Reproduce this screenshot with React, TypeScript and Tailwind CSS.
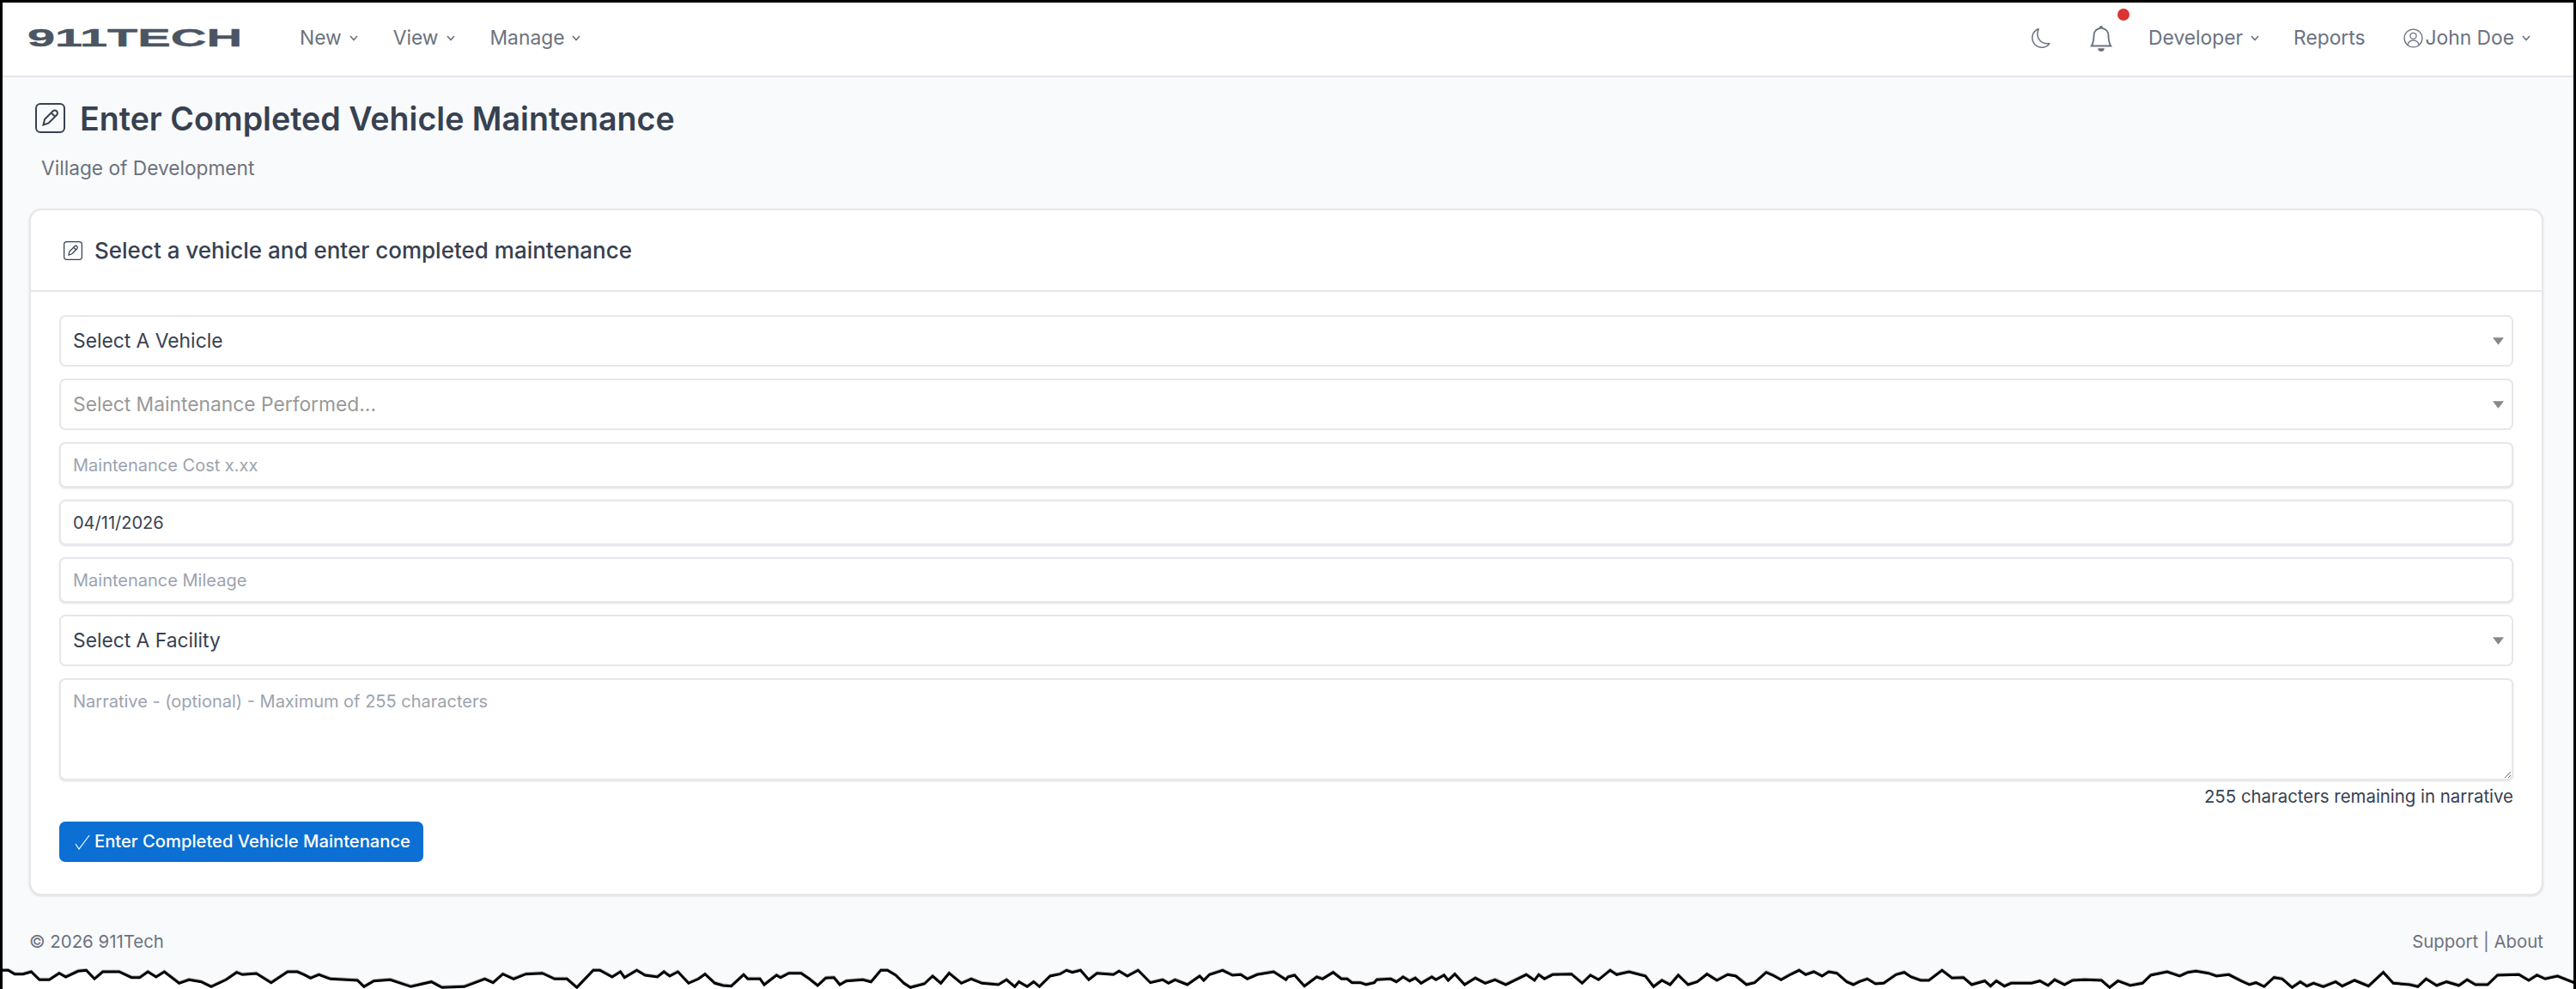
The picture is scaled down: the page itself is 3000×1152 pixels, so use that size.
import React from "react";
import { BsMoon, BsBell } from "react-icons/bs";

const tear1 = "0,55 10,55 18,68 28,68 38,60 48,88 60,88 72,65 80,78 95,58 105,55 115,85 125,60 145,60 160,80 170,80 180,60 190,78 200,60 218,100 230,88 245,95 257,112 275,88 288,62 295,70 312,66 330,98 350,60 362,60 370,70 378,82 388,70 402,85 435,90 443,112 455,92 475,88 500,112 525,95 538,115 565,112 590,85 600,98 612,68 625,85 640,68 660,65 675,85 690,85 702,115 722,55 730,55 745,78 755,60 760,80 775,55 785,72 800,78 808,60 815,75 825,60 838,100 850,85 858,68 870,100 880,108 890,110 905,70 910,85 925,85 930,105 945,72 950,80 960,65 975,65 985,85 995,108 1005,82 1015,80 1022,105 1030,92 1050,88 1060,95 1072,55 1080,55 1090,72 1100,100 1108,115 1125,102 1135,75 1145,100 1155,65 1170,100 1182,85 1195,100 1215,105 1225,88 1235,112 1240,95 1250,112 1258,95 1265,112 1278,75 1290,68 1298,55 1305,62 1315,55 1325,88 1335,65 1355,70 1362,58 1372,75 1385,55 1400,98 1415,88 1422,100 1430,88 1445,105 1460,75 1465,90 1472,70 1488,55 1500,72 1510,70 1518,85 1530,70 1550,60 1565,88";
const tear2 = "0,78 8,72 20,110 35,78 42,85 55,62 65,85 72,85 78,98 88,98 95,105 105,98 108,88 125,85 132,95 140,78 148,92 155,82 162,100 175,78 180,88 190,72 195,90 203,68 215,105 228,82 240,100 252,88 265,105 290,70 300,90 305,70 312,85 322,70 345,68 358,100 368,72 378,88 392,55 400,70 415,60 435,75 445,112 455,90 465,105 475,72 487,105 498,95 510,68 522,90 535,70 545,75 558,105 568,98 582,62 590,72 600,88 610,72 622,55 630,70 640,60 650,75 658,60 668,65 680,95 688,105 695,95 705,85 715,102 725,100 740,70 750,62 758,78 770,90 780,90 796,55 808,82 822,80 832,105 848,92 855,110 862,92 872,110 880,100 905,100 915,92 925,108 933,88 945,105 955,90 970,88 990,90 1000,115 1010,92 1025,108 1040,100 1050,72 1070,60 1085,75 1095,62 1105,58 1120,65 1130,75 1145,70 1160,92 1170,105 1178,98 1188,112 1200,80 1210,85 1222,115 1232,95 1240,110 1248,100 1260,112 1275,95 1283,110 1298,90 1315,110 1333,62 1345,100 1365,105 1375,112 1385,85 1398,108 1410,95 1425,108 1435,88 1445,105 1460,105 1472,72 1498,70 1510,90 1520,72 1530,85 1545,75 1565,98";

const toPts = (s: string, off: number) =>
  s.split(" ").map((p) => {
    const [h, v] = p.split(",").map(Number);
    return `${(h / 1.045 + off).toFixed(1)},${(v / 3).toFixed(1)}`;
  });

const pts = [...toPts(tear1, 0), ...toPts(tear2, 1500)].join(" ");

function Chevron({ className = "" }: { className?: string }) {
  return (
    <svg viewBox="0 0 10 7" className={`w-[10px] h-[7px] ${className}`} fill="none" stroke="currentColor" strokeWidth="1.6">
      <path d="M1 1l4 4.500 4-4.500" />
    </svg>
  );
}

function PencilBox({ className = "" }: { className?: string }) {
  return (
    <svg viewBox="0 0 35 35" className={className} fill="none" stroke="currentColor" strokeWidth="2">
      <rect x="1" y="1" width="33" height="33" rx="5" />
      <path d="M9.500 25.500l1.500-6.500 9.500-9.500a2.600 2.600 0 0 1 4.500 4.500l-9.500 9.500z" />
      <path d="M18.500 11.500l5 4.500" />
    </svg>
  );
}

function NavItem({ label }: { label: string }) {
  return (
    <span className="flex items-center gap-[9px] text-[22.8px] text-[#6b7280]">
      {label}
      <Chevron />
    </span>
  );
}

function SelectBox({ label, muted }: { label: string; muted?: boolean }) {
  return (
    <div className="flex items-center justify-between h-[60px] pl-[14px] pr-[9px] bg-white border-2 border-[#e5e7eb] rounded-[7px]">
      <span className={`text-[22.8px] ${muted ? "text-[#999999]" : "text-[#374151]"}`}>{label}</span>
      <svg viewBox="0 0 12 8" className="w-[13px] h-[9px]">
        <path d="M0 0h12L6 8z" fill="#888888" />
      </svg>
    </div>
  );
}

const inputCls =
  "h-[53px] px-[14px] bg-white border-2 border-[#e5e7eb] rounded-[7px] shadow-sm text-[20px] text-[#374151] placeholder:text-[#9ca3af] outline-none";
const areaCls =
  "block h-[119px] px-[14px] py-[10px] bg-white border-2 border-[#e5e7eb] rounded-[7px] shadow-sm text-[20px] text-[#374151] placeholder:text-[#9ca3af] outline-none";

export default function App() {
  return (
    <div className="relative w-[3000px] h-[1152px] overflow-hidden bg-[#f9fafb] border-t-[3px] border-x-[3px] border-black font-[Inter,sans-serif]">
      <nav className="flex items-center justify-between h-[87px] bg-white border-b-2 border-[#e5e7eb] pb-[2px] pl-[29px] pr-[50px]">
        <div className="flex items-center">
          <span className="block w-[246px] mr-[71px] origin-left scale-x-[1.99] whitespace-nowrap text-[29px] leading-none font-bold text-[#4b5563] [-webkit-text-stroke:0.4px_#4b5563] font-['Liberation_Sans',sans-serif]">
            911TECH
          </span>
          <div className="flex items-center gap-[41px]">
            <NavItem label="New" />
            <NavItem label="View" />
            <NavItem label="Manage" />
          </div>
        </div>
        <div className="flex items-center">
          <BsMoon className="w-[23px] h-[23px] text-[#6b7280] mr-[43px]" />
          <span className="relative mr-[40px]">
            <BsBell className="w-[30px] h-[30px] text-[#6b7280]" />
            <span className="absolute -top-[20px] right-[-18px] w-[14px] h-[14px] rounded-full bg-[#dc3333]" />
          </span>
          <NavItem label="Developer" />
          <span className="text-[22.8px] text-[#6b7280] ml-[40px] mr-[44px]">Reports</span>
          <span className="flex items-center gap-[9px] text-[22.8px] text-[#6b7280]">
            <span className="flex items-center gap-[3px]">
              <svg viewBox="0 0 26 26" className="w-[23px] h-[23px]" fill="none" stroke="currentColor" strokeWidth="1.500">
                <circle cx="13" cy="13" r="11.800" />
                <circle cx="13" cy="10" r="4" />
                <path d="M5.500 22c.8-4 3.600-6 7.500-6s6.700 2 7.500 6" />
              </svg>
              John Doe
            </span>
            <Chevron />
          </span>
        </div>
      </nav>

      <main className="pl-[31px] pr-[35px]">
        <div className="flex items-center gap-[17px] mt-[30px] pl-[7px] h-[35px]">
          <PencilBox className="w-[35px] h-[35px] text-[#374151]" />
          <h1 className="pt-[2px] text-[37.6px] leading-none font-semibold text-[#374151]">Enter Completed Vehicle Maintenance</h1>
        </div>
        <p className="mt-[24px] pl-[14px] text-[22.7px] leading-[34px] text-[#6b7280]">Village of Development</p>

        <section className="mt-[30px] h-[800px] bg-white border-2 border-[#e5e7eb] rounded-[14px] shadow-sm">
          <header className="flex items-center gap-[14px] h-[95px] pl-[38px] border-b-2 border-[#e5e7eb]">
            <PencilBox className="w-[22px] h-[24px] text-[#374151]" />
            <h2 className="text-[26px] font-medium text-[#374151]">Select a vehicle and enter completed maintenance</h2>
          </header>
          <div className="flex flex-col px-[33px] pt-[27px]">
            <div className="flex flex-col gap-[14px]">
              <SelectBox label="Select A Vehicle" />
              <SelectBox label="Select Maintenance Performed..." muted />
              <input placeholder="Maintenance Cost x.xx" className={inputCls} />
              <input defaultValue="04/11/2026" className={inputCls} />
              <input placeholder="Maintenance Mileage" className={inputCls} />
              <SelectBox label="Select A Facility" />
              <textarea placeholder="Narrative - (optional) - Maximum of 255 characters" className={areaCls} />
            </div>
            <p className="mt-[5px] text-right text-[20.4px] leading-[28px] text-[#374151]">255 characters remaining in narrative</p>
            <button className="mt-[15px] flex items-center gap-[5px] self-start w-[424px] h-[47px] pl-[18px] rounded-[7px] bg-[#0b6fd3] text-white text-[20.2px] font-medium">
              <svg viewBox="0 0 18 18" className="w-[18px] h-[18px]" fill="none" stroke="currentColor" strokeWidth="1.2">
                <path d="M1 11l4 6L17 1" />
              </svg>
              Enter Completed Vehicle Maintenance
            </button>
          </div>
        </section>

        <footer className="flex items-center justify-between mt-[40px] text-[20.4px] leading-[28px] text-[#6b7280]">
          <span>© 2026 911Tech</span>
          <span>Support | About</span>
        </footer>
      </main>

      <svg viewBox="0 0 3000 40" className="absolute bottom-0 left-[-3px] w-[3000px] h-[40px]">
        <polygon points={`${pts} 3000,40 0,40`} fill="#ffffff" />
        <polyline points={pts} fill="none" stroke="#b0b0b0" strokeWidth="2" transform="translate(0,-1.500)" />
        <polyline points={pts} fill="none" stroke="#000000" strokeWidth="3" />
      </svg>
    </div>
  );
}
